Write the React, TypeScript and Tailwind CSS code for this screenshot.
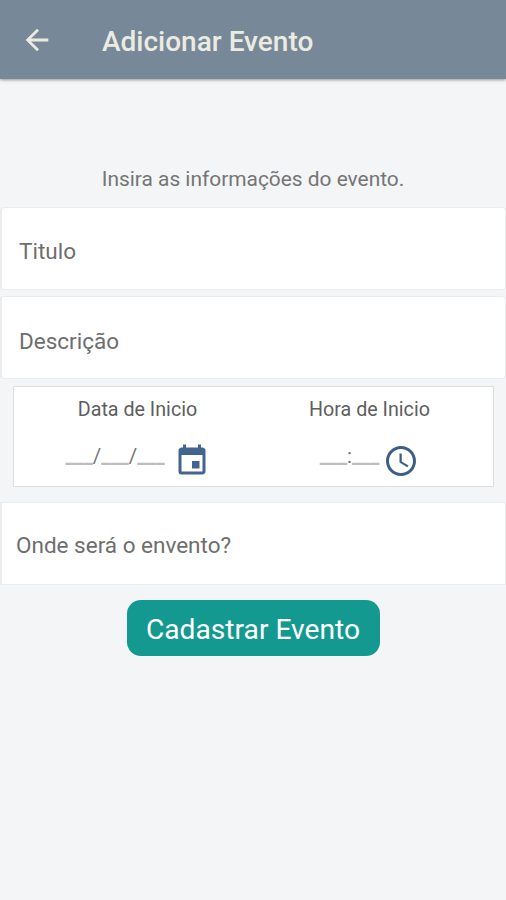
import { MdArrowBack, MdInsertInvitation, MdAccessTime } from 'react-icons/md';

const Field = ({ label, className }: { label: string; className: string }) => (
  <div
    className={`flex shrink-0 items-center border border-l-2 border-[#eaecee] bg-white text-[22.5px] text-[#6e6e6e] ${className}`}
  >
    {label}
  </div>
);

const Blank = () => (
  <span className="font-bold text-[#bdbdbd]">___</span>
);

const App = () => {
  return (
    <div className="flex h-[900px] w-full flex-col bg-[#f3f5f7] font-['Roboto',sans-serif]">
      <header className="flex h-[79px] shrink-0 items-center bg-[#778899] text-[#ebebe2] shadow-[0_1px_3px_rgba(0,0,0,0.4)]">
        <MdArrowBack className="ml-5 size-[34px]" />
        <h1 className="ml-12 pt-1 text-[28px] font-medium leading-8">
          Adicionar Evento
        </h1>
      </header>
      <p className="mt-[84px] text-center text-[20.9px] leading-8 text-[#757575]">
        Insira as informações do evento.
      </p>
      <Field
        label="Titulo"
        className="mt-3 h-[83px] rounded-[4px] pl-[17px] pt-1.5"
      />
      <Field
        label="Descrição"
        className="mt-1.5 h-[83px] rounded-[4px] pl-[17px] pt-2"
      />
      <div className="ml-[13px] mr-3 mt-[7px] flex h-[101px] shrink-0 border border-[#dcdfe1] bg-white">
        <div className="flex w-[247px] flex-col items-center">
          <span className="mt-[9px] text-[19.7px] leading-7 text-[#5e5e5e]">
            Data de Inicio
          </span>
          <div className="mt-[19px] flex items-center text-[#757575]">
            <span className="-mt-2.5 text-[20.5px] leading-7">
              <Blank />/<Blank />/<Blank />
            </span>
            <MdInsertInvitation className="ml-[9px] size-[36px] text-[#42658f]" />
          </div>
        </div>
        <div className="flex w-[217px] flex-col items-center">
          <span className="mt-[9px] text-[19.7px] leading-7 text-[#5e5e5e]">
            Hora de Inicio
          </span>
          <div className="mt-[19px] flex items-center text-[#757575]">
            <span className="-mt-2.5 text-[20.5px] leading-7">
              <Blank />:<Blank />
            </span>
            <MdAccessTime className="ml-1 size-[36px] text-[#3c5f88]" />
          </div>
        </div>
      </div>
      <Field
        label="Onde será o envento?"
        className="mt-[15px] h-[83px] pl-[14px] pt-1"
      />
      <button className="mx-auto mt-[15px] h-[56px] w-[253px] rounded-[14px] bg-[#149991] pt-1 text-[28.2px] text-white">
        Cadastrar Evento
      </button>
    </div>
  );
};

export default App;
